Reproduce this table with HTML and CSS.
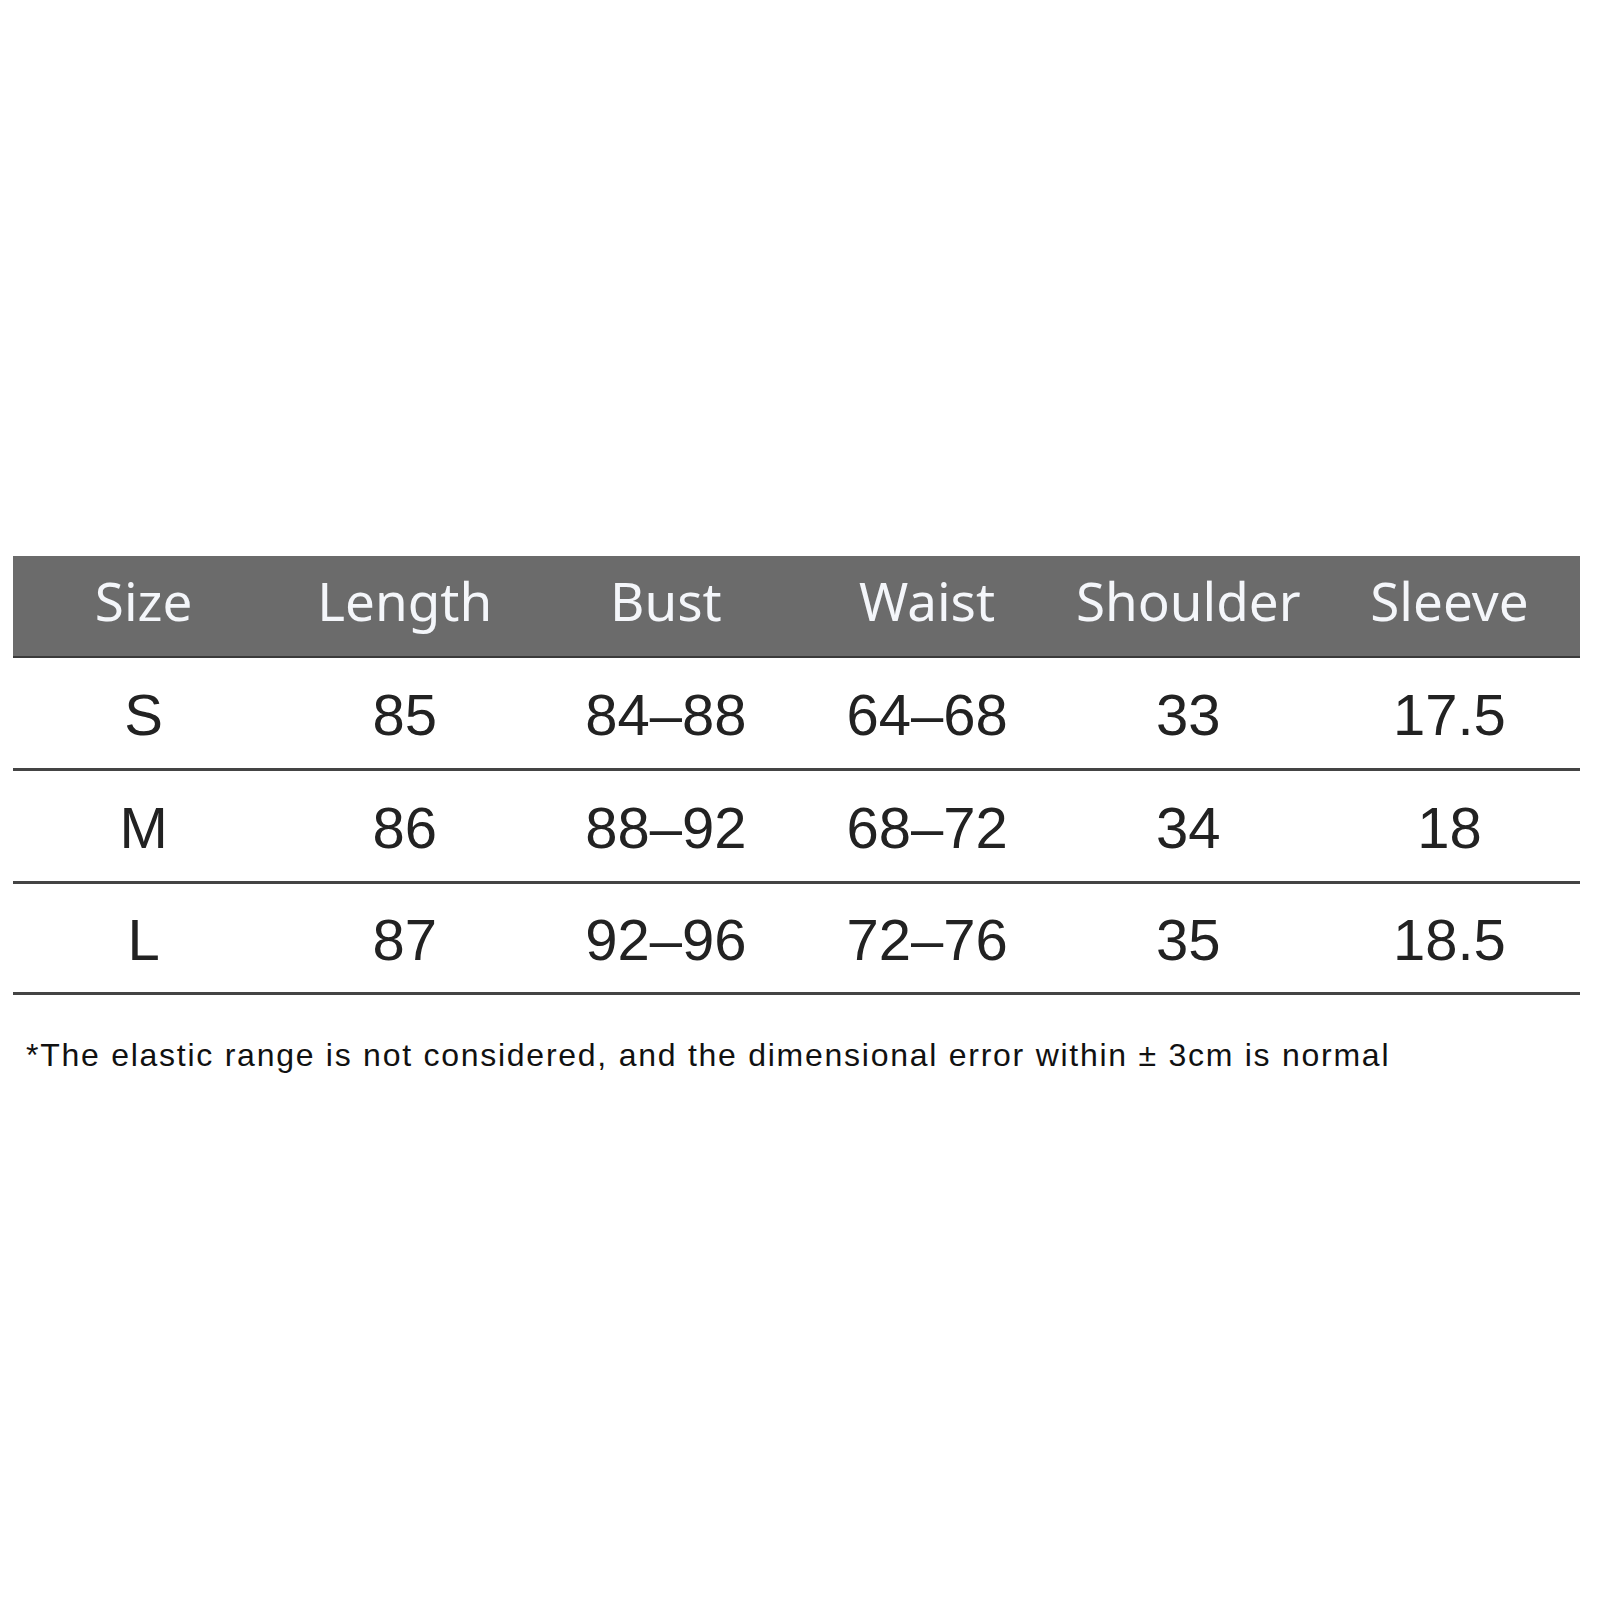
FILE: index.html
```html
<!DOCTYPE html>
<html>
<head>
<meta charset="utf-8">
<link rel="stylesheet" href="styles.css">
</head>
<body>
<div class="page">
  <div class="chart">
    <div class="row head">
      <div class="cell">Size</div>
      <div class="cell">Length</div>
      <div class="cell">Bust</div>
      <div class="cell">Waist</div>
      <div class="cell">Shoulder</div>
      <div class="cell">Sleeve</div>
    </div>
    <div class="row body">
      <div class="cell">S</div>
      <div class="cell">85</div>
      <div class="cell">84–88</div>
      <div class="cell">64–68</div>
      <div class="cell">33</div>
      <div class="cell">17.5</div>
    </div>
    <div class="row body">
      <div class="cell">M</div>
      <div class="cell">86</div>
      <div class="cell">88–92</div>
      <div class="cell">68–72</div>
      <div class="cell">34</div>
      <div class="cell">18</div>
    </div>
    <div class="row body">
      <div class="cell">L</div>
      <div class="cell">87</div>
      <div class="cell">92–96</div>
      <div class="cell">72–76</div>
      <div class="cell">35</div>
      <div class="cell">18.5</div>
    </div>
  </div>
  <p class="note">*The elastic range is not considered, and the dimensional error within ± 3cm is normal</p>
</div>
</body>
</html>
```
FILE: styles.css
```css
html, body {
  margin: 0;
  padding: 0;
  background: #fff;
}
.page {
  width: 1600px;
  height: 1600px;
  padding: 556px 20px 0 13px;
  box-sizing: border-box;
}
.chart {
  width: 1567px;
  display: flex;
  flex-direction: column;
}
.row {
  display: grid;
  grid-template-columns: repeat(6, 1fr);
  align-items: center;
}
.head {
  background: #6b6b6b;
  height: 100px;
  border-bottom: 2px solid #3a3a3a;
  color: #f4f6fa;
  font-family: "Noto Sans", "Open Sans", sans-serif;
  font-size: 53px;
}
.head .cell {
  padding-bottom: 12px;
}
.body {
  height: 110px;
  border-bottom: 3px solid #444;
  color: #222;
  font-family: "Liberation Sans", Arial, sans-serif;
  font-size: 58px;
}
.body .cell {
  padding-top: 4px;
}
.body:last-child {
  height: 108px;
}
.cell {
  text-align: center;
  line-height: 1;
}
.note {
  margin: 44px 0 0 13px;
  font-family: "Liberation Sans", Arial, sans-serif;
  font-size: 32px;
  letter-spacing: 1.74px;
  color: #111;
  line-height: 1;
}
```
